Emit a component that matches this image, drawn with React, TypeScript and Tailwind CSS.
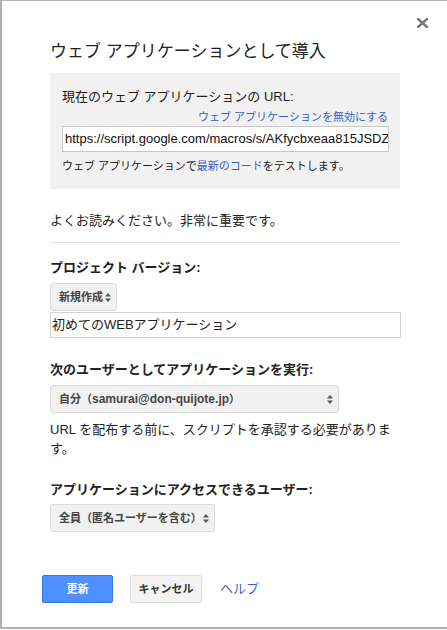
import React from 'react';

const font = "font-['Liberation_Sans','Noto_Sans_CJK_JP',sans-serif]";

const Arrows: React.FC = () => (
  <svg width="6" height="9" viewBox="0 0 6 9" className="shrink-0">
    <path d="M3 0 L6 3.5 L0 3.5 Z" fill="#555" />
    <path d="M3 9 L6 5.5 L0 5.5 Z" fill="#555" />
  </svg>
);

const SelectBox: React.FC<{ label: React.ReactNode; width: string }> = ({ label, width }) => (
  <div
    className={`${width} h-[28px] flex items-center justify-between pl-[8px] pr-[5px] bg-[#f1f1f1] border border-[#dcdcdc] rounded-[3px] text-[11px] font-bold text-[#444]`}
  >
    <span className="whitespace-nowrap">{label}</span>
    <Arrows />
  </div>
);

export default function App() {
  return (
    <div className={`${font} w-[460px] h-[629px] bg-white border-t border-l-2 border-b-2 border-[#b0b0b0] text-[#222] relative overflow-hidden`}>
      {/* close */}
      <svg width="11" height="10" viewBox="0 0 11 10" className="absolute left-[415px] top-[17px]">
        <path d="M1 1 L10 9 M10 1 L1 9" stroke="#777" strokeWidth="2.4" strokeLinecap="square" />
      </svg>

      <div className="pl-[48px] pt-[41px]">
        <h1 className="text-[17px] leading-[20px] font-normal whitespace-nowrap">ウェブ アプリケーションとして導入</h1>

        <div className="mt-[11px] w-[350px] bg-[#f1f1f1] pl-[12px] pr-[11px] pt-[16px] pb-[16px]">
          <p className="text-[13px] leading-[16px] whitespace-nowrap">現在のウェブ アプリケーションの URL:</p>
          <div className="mt-[5px] text-right text-[11px] leading-[14px] text-[#3a5fcd] pr-[1px]">
            ウェブ アプリケーションを無効にする
          </div>
          <div className="mt-[2px] h-[26px] w-[327px] bg-white border border-[#c6c6c6] flex items-center pl-[2px] overflow-hidden">
            <span className="text-[13px] whitespace-nowrap text-[#111]">https://script.google.com/macros/s/AKfycbxeaa815JSDZQ</span>
          </div>
          <p className="mt-[7px] text-[11px] leading-[14px] whitespace-nowrap">
            ウェブ アプリケーションで<span className="text-[#3a5fcd]">最新のコード</span>をテストします。
          </p>
        </div>

        <p className="mt-[24px] text-[13px] leading-[16px]">よくお読みください。非常に重要です。</p>
        <div className="mt-[13px] w-[350px] h-px bg-[#e5e5e5]" />

        <p className="mt-[17px] text-[13px] leading-[16px] font-bold">プロジェクト バージョン:</p>
        <div className="mt-[7px]">
          <SelectBox label="新規作成" width="w-[67px]" />
        </div>
        <div className="mt-px h-[26px] w-[351px] border border-[#d0d0d0] flex items-center pl-[1px] text-[13px]">
          初めてのWEBアプリケーション
        </div>

        <p className="mt-[24px] text-[13px] leading-[16px] font-bold">次のユーザーとしてアプリケーションを実行:</p>
        <div className="mt-[7px]">
          <SelectBox
            label={<>自分（<span className="text-[12px]">samurai@don-quijote.jp</span>）</>}
            width="w-[289px]"
          />
        </div>
        <p className="mt-[7px] w-[350px] text-[13px] leading-[19px]">
          URL を配布する前に、スクリプトを承認する必要があります。
        </p>

        <p className="mt-[24px] text-[13px] leading-[16px] font-bold">アプリケーションにアクセスできるユーザー:</p>
        <div className="mt-[6px]">
          <SelectBox label="全員（匿名ユーザーを含む）" width="w-[165px]" />
        </div>

        <div className="mt-[43px] -ml-[8px] flex items-center">
          <button className="w-[71px] h-[28px] bg-[#4d90fe] border border-[#3079ed] rounded-[2px] text-white text-[11px] font-bold">
            更新
          </button>
          <button className="ml-[17px] w-[72px] h-[28px] bg-[#f3f3f3] border border-[#dcdcdc] rounded-[2px] text-[#333] text-[11px] font-bold">
            キャンセル
          </button>
          <span className="ml-[18px] text-[13px] text-[#3a5fcd]">ヘルプ</span>
        </div>
      </div>
    </div>
  );
}
